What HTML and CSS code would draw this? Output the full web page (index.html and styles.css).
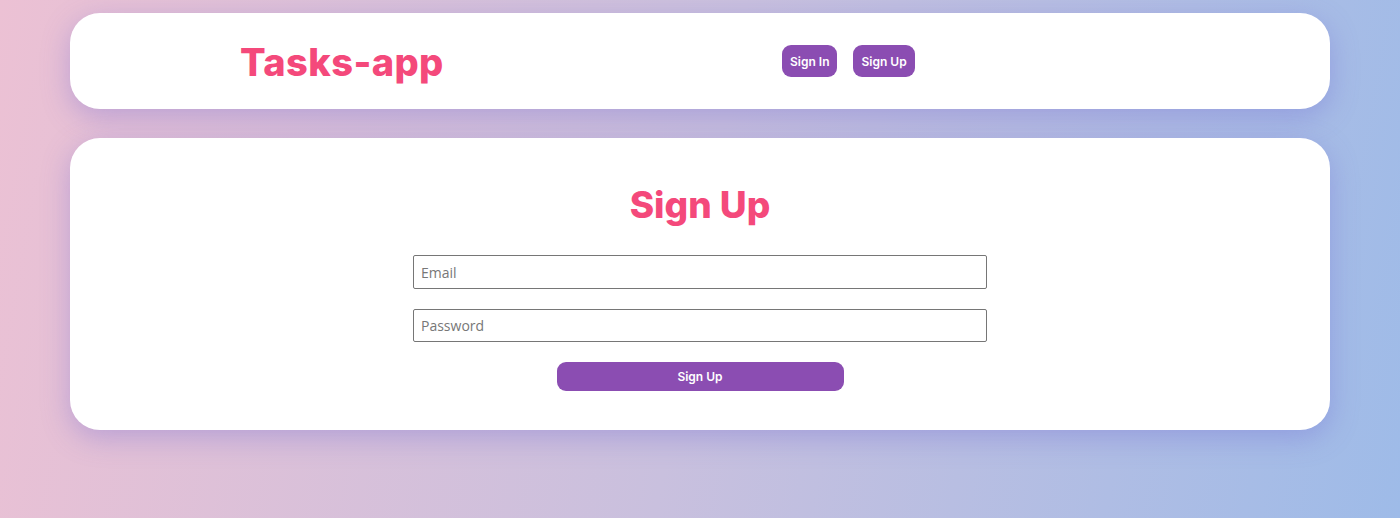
FILE: index.html
```html
<!DOCTYPE html>
<html lang="en">
<head>
<meta charset="utf-8">
<title>Tasks-app</title>
<link rel="stylesheet" href="styles.css">
</head>
<body>
<div class="page">
  <header class="card header">
    <h1 class="logo">Tasks-app</h1>
    <nav class="nav">
      <button class="btn btn-small">Sign In</button>
      <button class="btn btn-small">Sign Up</button>
    </nav>
  </header>
  <main class="card main">
    <h2 class="title">Sign Up</h2>
    <form class="form">
      <input class="field" type="email" placeholder="Email">
      <input class="field" type="password" placeholder="Password">
      <button class="btn btn-wide" type="button">Sign Up</button>
    </form>
  </main>
</div>
</body>
</html>
```
FILE: styles.css
```css
* { box-sizing: border-box; }
html, body { margin: 0; height: 100%; }
body {
  background: linear-gradient(100deg, #ecc1d4 0%, #c9c0de 50%, #9ebbe8 100%);
  font-family: Inter, "Noto Sans", sans-serif;
}
.page {
  width: 1260px;
  margin: 0 auto;
  padding-top: 13px;
  display: flex;
  flex-direction: column;
  gap: 29px;
}
.card {
  background: #fff;
  border-radius: 30px;
  box-shadow: 0 8px 28px rgba(110, 100, 210, 0.35);
}
.header {
  height: 96px;
  display: grid;
  grid-template-columns: 542px 1fr;
  padding-left: 170px;
  align-items: center;
}
.logo {
  margin: 0;
  font-size: 38px;
  font-weight: 800;
  color: #f4497b;
  letter-spacing: 0.4px;
  transform: translateY(1px);
}
.nav {
  display: flex;
  gap: 16px;
}
.btn {
  background: #8b4db2;
  color: #fff;
  border: none;
  border-radius: 9px;
  font-family: Inter, "Noto Sans", sans-serif;
  font-weight: 600;
  font-size: 12px;
  cursor: pointer;
}
.btn-small {
  height: 32px;
  padding: 0 8px;
}
.main {
  height: 292px;
  display: flex;
  flex-direction: column;
  align-items: center;
  padding-top: 45px;
}
.title {
  margin: 0;
  font-size: 37px;
  font-weight: 800;
  color: #f4497b;
  line-height: 44px;
}
.form {
  display: flex;
  flex-direction: column;
  align-items: center;
  margin-top: 28px;
  gap: 20px;
}
.field {
  width: 574px;
  height: 34px;
  border: 1px solid #767676;
  border-radius: 2px;
  padding: 0 7px;
  font-family: "Open Sans", "Noto Sans", sans-serif;
  font-size: 14px;
  color: #333;
  background: #fff;
}
.field::placeholder { color: #777; }
.field + .field { height: 33px; }
.btn-wide {
  width: 287px;
  height: 29px;
  border-radius: 9px;
}
```
